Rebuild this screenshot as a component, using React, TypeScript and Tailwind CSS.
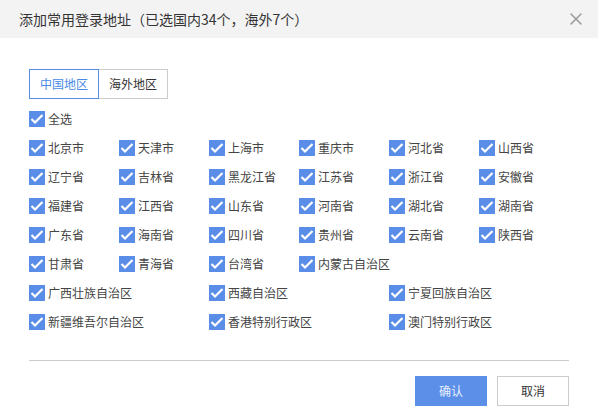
import { X } from 'lucide-react'

const rows: string[][] = [
  ['北京市', '天津市', '上海市', '重庆市', '河北省', '山西省'],
  ['辽宁省', '吉林省', '黑龙江省', '江苏省', '浙江省', '安徽省'],
  ['福建省', '江西省', '山东省', '河南省', '湖北省', '湖南省'],
  ['广东省', '海南省', '四川省', '贵州省', '云南省', '陕西省'],
  ['甘肃省', '青海省', '台湾省', '内蒙古自治区'],
]

const wideRows: string[][] = [
  ['广西壮族自治区', '西藏自治区', '宁夏回族自治区'],
  ['新疆维吾尔自治区', '香港特别行政区', '澳门特别行政区'],
]

function Check({ label }: { label: string }) {
  return (
    <label className="flex items-center gap-[3px] text-[12px] text-[#444] whitespace-nowrap">
      <span className="w-4 h-4 bg-[#5a8de8] flex items-center justify-center shrink-0">
        <svg width="16" height="16" viewBox="0 0 16 16" fill="none">
          <path d="M2.5 8 L6 11.5 L13.5 4" stroke="white" strokeWidth="2.2" />
        </svg>
      </span>
      {label}
    </label>
  )
}

export default function App() {
  return (
    <div className="w-[598px] h-[419px] bg-white" style={{ fontFamily: '"Noto Sans CJK SC", "Noto Sans", sans-serif' }}>
      {/* Header */}
      <div className="h-[38px] bg-[#f3f3f3] flex items-center justify-between pl-[19px] pr-[12px]">
        <h1 className="text-[14px] text-[#333]">添加常用登录地址（已选国内34个，海外7个）</h1>
        <X className="w-5 h-5 text-[#999]" strokeWidth={1.8} />
      </div>

      <div className="px-[29px]">
        {/* Tabs */}
        <div className="flex mt-[31px]">
          <div className="w-[70px] h-[30px] border border-[#5a8de8] text-[#4a8ae6] text-[12px] flex items-center justify-center">中国地区</div>
          <div className="w-[69px] h-[30px] border border-l-0 border-[#ccc] text-[#333] text-[12px] flex items-center justify-center">海外地区</div>
        </div>

        {/* List */}
        <div className="mt-[5px]">
          <div className="h-[29px] flex items-center">
            <Check label="全选" />
          </div>
          {rows.map((row, i) => (
            <div key={i} className="h-[29px] grid grid-cols-[repeat(6,90px)] items-center">
              {row.map(name => <Check key={name} label={name} />)}
            </div>
          ))}
          {wideRows.map((row, i) => (
            <div key={i} className="h-[29px] grid grid-cols-[repeat(3,180px)] items-center">
              {row.map(name => <Check key={name} label={name} />)}
            </div>
          ))}
        </div>

        <div className="mt-[24px] border-t border-[#ccc]" />

        {/* Footer */}
        <div className="flex justify-end gap-[10px] mt-[15px]">
          <button className="w-[72px] h-[30px] bg-[#5b8fe8] text-[#e8f0ff] text-[12px]">确认</button>
          <button className="w-[72px] h-[30px] border border-[#ccc] bg-white text-[#333] text-[12px]">取消</button>
        </div>
      </div>
    </div>
  )
}
